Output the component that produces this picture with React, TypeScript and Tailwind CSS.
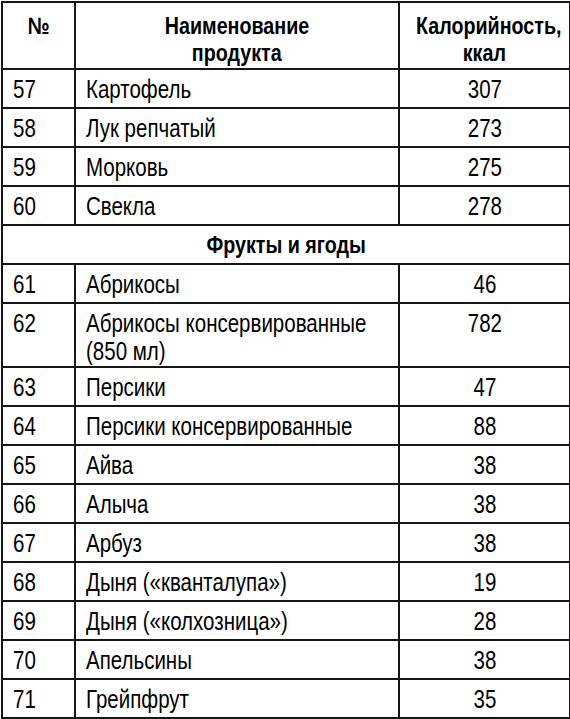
import React from 'react';

type Row = { n?: number; name: string[]; kcal?: number; section?: boolean };

const rows: Row[] = [
  { n: 57, name: ['Картофель'], kcal: 307 },
  { n: 58, name: ['Лук репчатый'], kcal: 273 },
  { n: 59, name: ['Морковь'], kcal: 275 },
  { n: 60, name: ['Свекла'], kcal: 278 },
  { name: ['Фрукты и ягоды'], section: true },
  { n: 61, name: ['Абрикосы'], kcal: 46 },
  { n: 62, name: ['Абрикосы консервированные', '(850 мл)'], kcal: 782 },
  { n: 63, name: ['Персики'], kcal: 47 },
  { n: 64, name: ['Персики консервированные'], kcal: 88 },
  { n: 65, name: ['Айва'], kcal: 38 },
  { n: 66, name: ['Алыча'], kcal: 38 },
  { n: 67, name: ['Арбуз'], kcal: 38 },
  { n: 68, name: ['Дыня («кванталупа»)'], kcal: 19 },
  { n: 69, name: ['Дыня («колхозница»)'], kcal: 28 },
  { n: 70, name: ['Апельсины'], kcal: 38 },
  { n: 71, name: ['Грейпфрут'], kcal: 35 },
];

// narrow the Arial-metric face so it reads like a condensed grotesque
function Narrow({ children, center }: { children: React.ReactNode; center?: boolean }) {
  return (
    <span className={`inline-block whitespace-nowrap scale-x-[0.82] ${center ? 'origin-center' : 'origin-left'}`}>
      {children}
    </span>
  );
}

const cell = 'border-2 border-[#161616] align-top';

export default function App() {
  return (
    <div
      className="w-[570px] h-[719px] bg-white text-black overflow-hidden"
      style={{ fontFamily: '"Liberation Sans", Arial, sans-serif' }}
    >
      <table className="border-collapse w-[568px] ml-px mt-px table-fixed text-[25px] leading-[28px]">
        <colgroup>
          <col className="w-[73px]" />
          <col className="w-[324px]" />
          <col className="w-[171px]" />
        </colgroup>
        <thead>
          <tr className="h-[67px]">
            <th className={`${cell} pt-[9px] font-bold text-[24px] leading-[27px]`}>
              <Narrow center>№</Narrow>
            </th>
            <th className={`${cell} pt-[9px] font-bold text-[24px] leading-[27px]`}>
              <Narrow center>Наименование</Narrow>
              <br />
              <Narrow center>продукта</Narrow>
            </th>
            <th className={`${cell} pt-[9px] font-bold text-[24px] leading-[27px]`}>
              <Narrow center>Калорийность,</Narrow>
              <br />
              <Narrow center>ккал</Narrow>
            </th>
          </tr>
        </thead>
        <tbody>
          {rows.map((r) =>
            r.section ? (
              <tr key={r.name[0]} className="h-[39px]">
                <td colSpan={3} className={`${cell} text-center font-bold text-[24px] pt-[5px]`}>
                  <Narrow center>{r.name[0]}</Narrow>
                </td>
              </tr>
            ) : (
              <tr key={r.n} className="h-[39px]">
                <td className={`${cell} pl-[10px] pt-[5px]`}>
                  <Narrow>{r.n}</Narrow>
                </td>
                <td className={`${cell} pl-[10px] pt-[5px] pb-[1px]`}>
                  {r.name.map((line, i) => (
                    <div key={i}>
                      <Narrow>{line}</Narrow>
                    </div>
                  ))}
                </td>
                <td className={`${cell} text-center pt-[5px]`}>
                  <Narrow center>{r.kcal}</Narrow>
                </td>
              </tr>
            ),
          )}
        </tbody>
      </table>
    </div>
  );
}
